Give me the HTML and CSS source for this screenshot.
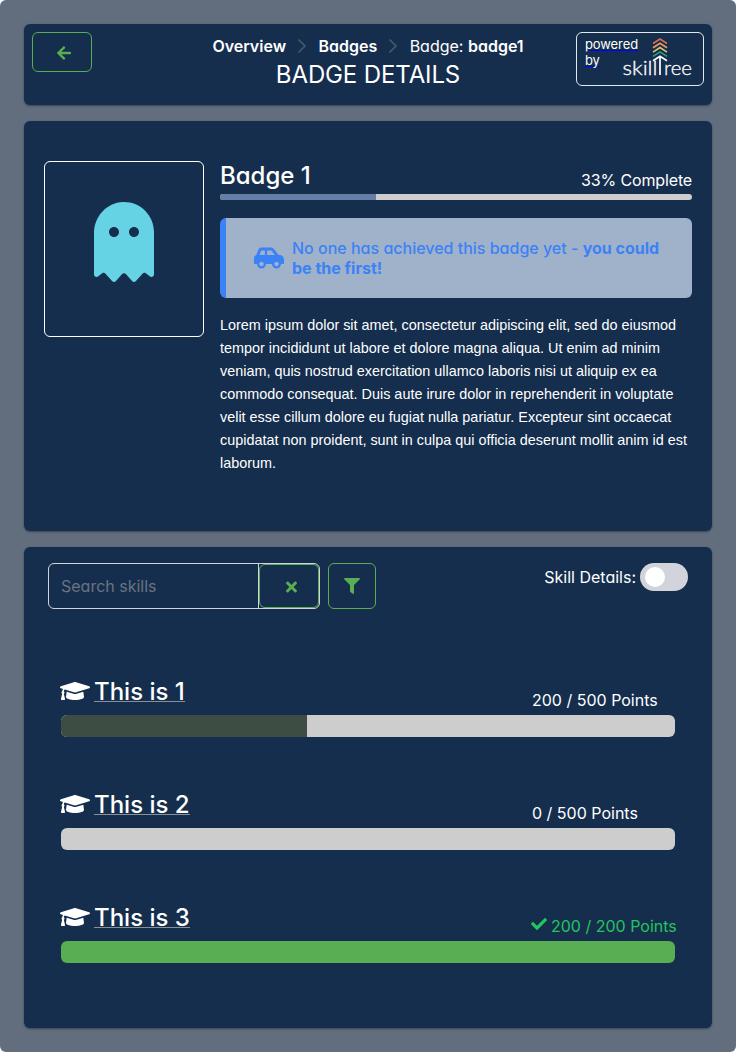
FILE: index.html
```html
<!DOCTYPE html>
<html lang="en">
<head>
<meta charset="utf-8">
<title>Badge Details</title>
<link rel="stylesheet" href="styles.css">
</head>
<body>
<svg class="defs" width="0" height="0">
  <symbol id="cap" viewBox="0 0 640 512"><path d="M622.34 153.2L343.4 67.5c-15.2-4.67-31.6-4.67-46.79 0L17.66 153.2c-23.54 7.23-23.54 38.36 0 45.59l48.63 14.94c-10.67 13.19-17.23 29.28-17.88 46.9C38.78 266.15 32 276.11 32 288c0 10.78 5.68 19.85 13.86 25.65L20.33 428.53C18.11 438.52 25.71 448 35.94 448h56.11c10.24 0 17.84-9.48 15.62-19.47L82.14 313.65C90.32 307.85 96 298.78 96 288c0-11.57-6.47-21.25-15.66-26.87.76-15.02 8.44-28.3 20.69-36.72L296.6 284.5c9.06 2.78 26.44 6.25 46.79 0l278.95-85.7c23.55-7.24 23.55-38.36 0-45.6zM352.79 315.09c-28.53 8.76-52.84 3.92-65.59 0l-145.02-44.55L128 384c0 35.35 85.96 64 192 64s192-28.65 192-64l-14.18-113.47-145.03 44.56z"/></symbol>
</svg>
<main class="page">
  <header class="card header">
    <button class="btn back" aria-label="Back"><svg width="14" height="16" viewBox="0 0 448 512"><path d="M257.5 445.1l-22.2 22.2c-9.4 9.4-24.6 9.4-33.9 0L7 273c-9.4-9.4-9.4-24.6 0-33.9L201.4 44.7c9.4-9.4 24.6-9.4 33.9 0l22.2 22.2c9.5 9.5 9.3 25-.4 34.3L136.6 216H424c13.3 0 24 10.7 24 24v32c0 13.3-10.7 24-24 24H136.6l120.5 114.8c9.8 9.3 10 24.8.4 34.3z"/></svg></button>
    <div class="heading">
      <nav class="crumbs">
        <b>Overview</b>
        <svg class="chev" width="10" height="16" viewBox="0 0 10 16"><path d="M1.5 1.5 8 8l-6.500 6.500"/></svg>
        <b>Badges</b>
        <svg class="chev" width="10" height="16" viewBox="0 0 10 16"><path d="M1.5 1.5 8 8l-6.500 6.500"/></svg>
        <span>Badge: <b>badge1</b></span>
      </nav>
      <h1 class="title">BADGE DETAILS</h1>
    </div>
    <a class="powered">
      <span class="powered-text">powered<br>by</span>
      <svg class="logo" width="70" height="40" viewBox="0 0 70 40">
        <g class="leaves">
          <path stroke="#dc6a54" d="M30 6.500 37 2l7 4.500"/>
          <path stroke="#ee9a5c" d="M30 10.800l7-4.500 7 4.500"/>
          <path stroke="#e5c163" d="M30 15.100l7-4.500 7 4.500"/>
          <path stroke="#2a9d8f" d="M30 19.400l7-4.500 7 4.500"/>
          <path stroke="#fff" d="M30 23.700l7-4.500 7 4.500M37 19.500V38"/>
        </g>
        <text x="-.5" y="38" textLength="35" lengthAdjust="spacingAndGlyphs">skill</text>
        <text x="41" y="38" textLength="28" lengthAdjust="spacingAndGlyphs">ree</text>
      </svg>
    </a>
  </header>

  <section class="card badge">
    <div class="badge-icon"><svg width="60" height="80" viewBox="0 0 384 512"><path d="M186.1.09C81.01 3.24 0 94.92 0 200.05v263.92c0 14.26 17.23 21.39 27.31 11.31l24.92-18.53c6.66-4.95 16-3.99 21.51 2.21l42.95 48.35c6.25 6.25 16.38 6.25 22.63 0l40.72-45.85c6.37-7.17 17.56-7.17 23.92 0l40.72 45.85c6.25 6.25 16.38 6.25 22.63 0l42.95-48.35c5.51-6.2 14.85-7.17 21.51-2.21l24.92 18.53c10.08 10.08 27.31 2.94 27.31-11.31V192C384 84 294.83-3.17 186.1.09zM128 224c-17.67 0-32-14.33-32-32s14.33-32 32-32 32 14.33 32 32-14.33 32-32 32zm128 0c-17.67 0-32-14.33-32-32s14.33-32 32-32 32 14.33 32 32-14.33 32-32 32z"/></svg></div>
    <div class="badge-body">
      <div class="badge-head"><h2 class="name">Badge 1</h2><span class="complete">33% Complete</span></div>
      <div class="bar thin"><div class="fill slate" style="width:33%"></div></div>
      <div class="notice">
        <svg width="30" height="24" viewBox="0 0 640 512"><path d="M544 192h-16L419.22 56.02A64.025 64.025 0 0 0 369.24 32H155.33c-26.17 0-49.7 15.93-59.42 40.23L48 194.26C20.44 201.4 0 226.21 0 256v112c0 8.84 7.16 16 16 16h48c0 53.02 42.98 96 96 96s96-42.98 96-96h128c0 53.02 42.98 96 96 96s96-42.98 96-96h48c8.84 0 16-7.16 16-16v-80c0-53.02-42.98-96-96-96zM160 432c-26.47 0-48-21.53-48-48s21.53-48 48-48 48 21.53 48 48-21.53 48-48 48zm72-240H116.93l38.4-96H232v96zm48 0V96h89.24l76.8 96H280zm200 240c-26.47 0-48-21.53-48-48s21.53-48 48-48 48 21.53 48 48-21.53 48-48 48z"/></svg>
        <p>No one has achieved this badge yet - <b>you could be the first!</b></p>
      </div>
      <p class="desc">Lorem ipsum dolor sit amet, consectetur adipiscing elit, sed do eiusmod tempor incididunt ut labore et dolore magna aliqua. Ut enim ad minim veniam, quis nostrud exercitation ullamco laboris nisi ut aliquip ex ea commodo consequat. Duis aute irure dolor in reprehenderit in voluptate velit esse cillum dolore eu fugiat nulla pariatur. Excepteur sint occaecat cupidatat non proident, sunt in culpa qui officia deserunt mollit anim id est laborum.</p>
    </div>
  </section>

  <section class="card skills">
    <div class="toolbar">
      <div class="search">
        <input class="field" type="text" placeholder="Search skills">
        <button class="btn clear" aria-label="Clear"><svg width="11" height="16" viewBox="0 0 352 512"><path d="M242.72 256l100.07-100.07c12.28-12.28 12.28-32.19 0-44.48l-22.24-22.24c-12.28-12.28-32.19-12.28-44.48 0L176 189.28 75.93 89.21c-12.28-12.28-32.19-12.28-44.48 0L9.21 111.45c-12.28 12.28-12.28 32.19 0 44.48L109.28 256 9.21 356.07c-12.28 12.28-12.28 32.19 0 44.48l22.24 22.24c12.28 12.28 32.2 12.28 44.48 0L176 322.72l100.07 100.07c12.28 12.28 32.2 12.28 44.48 0l22.24-22.24c12.28-12.28 12.28-32.19 0-44.48L242.72 256z"/></svg></button>
      </div>
      <button class="btn filter" aria-label="Filter"><svg width="16" height="16" viewBox="0 0 512 512"><path d="M487.976 0H24.028C2.71 0-8.047 25.866 7.058 40.971L192 225.941V432c0 7.831 3.821 15.17 10.237 19.662l80 55.98C298.02 518.69 320 507.493 320 487.98V225.941l184.947-184.97C520.021 25.896 509.338 0 487.976 0z"/></svg></button>
      <label class="details">Skill Details: <span class="switch"></span></label>
    </div>
    <div class="list">
      <article class="skill">
        <div class="skill-head">
          <svg class="cap" width="30" height="24"><use href="#cap"/></svg><a class="link">This is 1</a>
          <span class="points">200 / 500 Points</span>
        </div>
        <div class="bar"><div class="fill dark" style="width:40%"></div></div>
      </article>
      <article class="skill">
        <div class="skill-head">
          <svg class="cap" width="30" height="24"><use href="#cap"/></svg><a class="link">This is 2</a>
          <span class="points">0 / 500 Points</span>
        </div>
        <div class="bar"></div>
      </article>
      <article class="skill">
        <div class="skill-head">
          <svg class="cap" width="30" height="24"><use href="#cap"/></svg><a class="link">This is 3</a>
          <span class="points done"><svg width="16" height="16" viewBox="0 0 512 512"><path d="M173.898 439.404l-166.4-166.4c-9.997-9.997-9.997-26.206 0-36.204l36.203-36.204c9.997-9.998 26.207-9.998 36.204 0L192 312.69 432.095 72.596c9.997-9.997 26.207-9.997 36.204 0l36.203 36.204c9.997 9.997 9.997 26.206 0 36.204l-294.4 294.401c-9.998 9.997-26.207 9.997-36.204-.001z"/></svg>200 / 200 Points</span>
        </div>
        <div class="bar"><div class="fill green" style="width:100%"></div></div>
      </article>
    </div>
  </section>
</main>
</body>
</html>
```
FILE: styles.css
```css
* { box-sizing: border-box; }
html { background: #fff; }
body {
  margin: 0;
  font: 400 16px/20px Inter, sans-serif;
  font-feature-settings: "cv02", "cv03", "cv04", "cv11";
  color: #fff;
}
h1, h2, p { margin: 0; }
b { font-weight: 600; }
svg { display: block; fill: currentColor; flex: none; }
.defs { position: absolute; }
.page {
  display: flex;
  flex-direction: column;
  gap: 16px;
  height: 1052px;
  padding: 24px;
  border-radius: 6px;
  background: #626d7d;
}
.card {
  border-radius: 6px;
  background: #152e4d;
  box-shadow: 0 1px 3px rgba(0, 0, 0, .1), 0 1px 2px 0 rgba(0, 0, 0, .3);
}
.btn {
  display: flex;
  align-items: center;
  justify-content: center;
  padding: 0;
  border: 1px solid #59ad52;
  border-radius: 6px;
  background: transparent;
  color: #59ad52;
}

.header {
  display: grid;
  grid-template-columns: 128px 1fr 128px;
  align-items: start;
  height: 81px;
  padding: 8px;
}
.back { width: 60px; height: 40px; padding: 2px 0 0 4px; }
.heading { text-align: center; padding-top: 4px; }
.crumbs { display: flex; justify-content: center; gap: 11.200px; white-space: nowrap; }
.chev { margin-top: 2px; fill: none; stroke: #4b5867; stroke-width: 1.6; }
.title { margin-top: 4px; font-size: 24px; line-height: 30px; font-weight: 400; letter-spacing: -.12px; }
.powered {
  display: flex;
  height: 54px;
  padding: 4px 8px;
  border: 1px solid #e2e8f0;
  border-radius: 6px;
}
.powered-text {
  width: 38px;
  font-size: 13px;
  line-height: 15.500px;
  letter-spacing: -.1px;
  text-decoration: underline;
  text-decoration-color: #00f;
}
.logo { overflow: visible; }
.logo text { font: 300 19px Lato, sans-serif; fill: #fff; stroke: #fff; stroke-width: .3px; }
.leaves { fill: none; stroke-width: 1.7; }

.badge { display: flex; gap: 16px; height: 410px; padding: 40px 20px; }
.badge-icon {
  display: flex;
  justify-content: center;
  width: 160px;
  height: 176px;
  padding-top: 40px;
  border: 1px solid #fff;
  border-radius: 6px;
  color: #66d3e4;
}
.badge-body { flex: 1; min-width: 0; }
.badge-head { display: flex; justify-content: space-between; align-items: flex-end; height: 33px; }
.name { font-size: 24px; line-height: 30px; font-weight: 500; padding-bottom: 3px; }
.complete { padding-bottom: 4px; letter-spacing: -.15px; }
.bar { height: 22px; border-radius: 6px; background: #cdcdcd; overflow: hidden; }
.thin { height: 6px; border-radius: 3px; }
.fill { height: 100%; }
.slate { background: #647ea8; }
.dark { background: #3e4d44; }
.green { background: #59ad52; }
.notice {
  display: flex;
  align-items: center;
  gap: 8px;
  height: 80px;
  margin-top: 18px;
  padding: 0 28px;
  border-left: 6px solid #3b82f6;
  border-radius: 6px;
  background: #a0b1ca;
  color: #3b82f6;
  font-weight: 500;
}
.notice b { font-weight: 700; }
.desc { margin-top: 16px; font: 14.400px/23px "Liberation Sans", sans-serif; }

.skills { height: 481px; padding: 16px 24px; }
.toolbar { display: flex; align-items: flex-start; }
.search { display: flex; width: 272px; height: 46px; border: 1px solid #d1d5db; border-radius: 6px; }
.field {
  width: 210px;
  padding: 0 12px;
  border: 0;
  border-right: 1px solid #d1d5db;
  background: transparent;
  color: #fff;
  font: inherit;
}
.field::placeholder { color: #6b7280; opacity: 1; }
.clear { flex: 1; padding-left: 4px; padding-top: 2px; }
.filter { width: 48px; height: 46px; margin-left: 8px; }
.details { display: flex; align-items: center; gap: 4px; margin-left: auto; }
.switch { width: 48px; height: 28px; padding: 4px 5px; border-radius: 14px; background: #d1d5db; }
.switch::before { content: ""; display: block; width: 20px; height: 20px; border-radius: 50%; background: #fff; }

.list { display: flex; flex-direction: column; gap: 55px; padding: 70px 13px 0; }
.skill-head { display: flex; height: 36px; }
.cap { margin-left: -1px; }
.link {
  align-self: flex-start;
  margin-left: 4px;
  font-size: 24px;
  line-height: 26px;
  font-weight: 500;
  height: 23px;
  border-bottom: 1px solid #8b8f96;
}
.points { display: flex; width: 144px; margin: 11px 0 0 auto; padding-left: 1px; white-space: nowrap; }
.done { gap: 4px; padding-left: 0; color: #22c55e; }
```
